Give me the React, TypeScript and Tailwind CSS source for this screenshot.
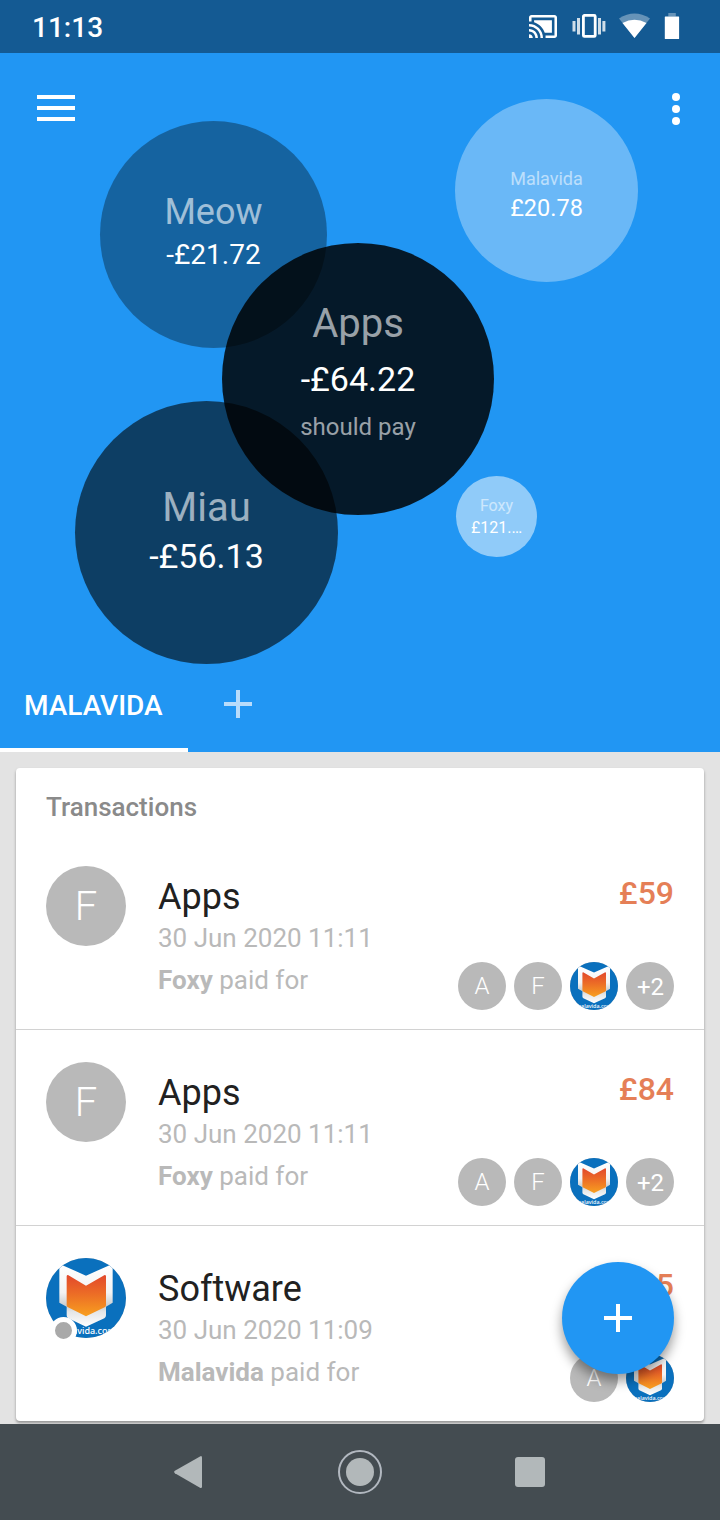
import { MdCastConnected } from "react-icons/md";

const BUBBLES = [
  { name: "Meow", amount: "-£21.72", note: "", box: "left-[100px] top-[68px] size-[227px] bg-black/34 pt-[73px]", nameCls: "text-[36px] text-white/60", amountCls: "text-[28px] mt-[11px]" },
  { name: "Malavida", amount: "£20.78", note: "", box: "left-[455px] top-[46px] size-[183px] bg-white/33 pt-[71px]", nameCls: "text-[18px] text-white/55", amountCls: "text-[23.5px] mt-[9px]" },
  { name: "Miau", amount: "-£56.13", note: "", box: "left-[75px] top-[348px] size-[263px] bg-black/59 pt-[87px]", nameCls: "text-[40px] text-white/60", amountCls: "text-[34px] mt-[11px]" },
  { name: "Apps", amount: "-£64.22", note: "should pay", box: "left-[222px] top-[190px] size-[272px] bg-black/83 pt-[61px]", nameCls: "text-[40px] text-white/60", amountCls: "text-[34px] mt-[18px]" },
  { name: "Foxy", amount: "£121.…", note: "", box: "left-[456px] top-[423px] size-[81px] bg-white/50 pt-[22px]", nameCls: "text-[16px] text-white/55", amountCls: "text-[16px] mt-[6px]" },
];

const TRANSACTIONS = [
  { title: "Apps", date: "30 Jun 2020 11:11", payer: "Foxy", avatar: "F", amount: "£59", people: ["A", "F", "logo", "+2"] },
  { title: "Apps", date: "30 Jun 2020 11:11", payer: "Foxy", avatar: "F", amount: "£84", people: ["A", "F", "logo", "+2"] },
  { title: "Software", date: "30 Jun 2020 11:09", payer: "Malavida", avatar: "logo", amount: "£15", people: ["A", "logo"] },
];

function Logo() {
  return (
    <svg viewBox="0 0 240 240" className="size-full rounded-full">
      <defs>
        <linearGradient id="shield" x1="0" y1="0" x2="0" y2="1">
          <stop offset="0" stopColor="#e2482b" />
          <stop offset="0.45" stopColor="#ec6c26" />
          <stop offset="1" stopColor="#f8a01f" />
        </linearGradient>
        <linearGradient id="frame" x1="0" y1="0" x2="0" y2="1">
          <stop offset="0" stopColor="#ffffff" />
          <stop offset="0.45" stopColor="#f3f3f3" />
          <stop offset="0.66" stopColor="#c9cdd0" />
          <stop offset="0.76" stopColor="#e4e6e7" />
          <stop offset="1" stopColor="#ffffff" />
        </linearGradient>
      </defs>
      <rect width="240" height="240" fill="#0a70bd" />
      <path d="M46 20 120 53l74-33q6 1 6 8v106l-20 12v26q0 6-5 9l-55 25-53-25q-5-3-5-9v-26l-22-12V28q0-7 6-8z" fill="url(#frame)" />
      <path d="M66 51l54 32 56-32q4 0 4 4v86q0 5-4 7l-56 27-54-27q-4-2-4-7V55q0-4 4-4z" fill="url(#shield)" />
      <text x="120" y="229" textAnchor="middle" fontSize="27" fontWeight="500" fill="#fff" fontFamily="Noto Sans, sans-serif">malavida.com</text>
    </svg>
  );
}

function Person({ label }: { label: string }) {
  return (
    <div className="size-12 rounded-full bg-[#b9b9b9] text-white text-[24px] leading-none flex items-center justify-center">
      {label === "logo" ? <Logo /> : <span className={label.length > 1 ? "pt-[2px] pl-px" : "font-light"}>{label}</span>}
    </div>
  );
}

function StatusBar() {
  return (
    <div className="h-[53px] bg-[#145a93] flex justify-between pl-8 pr-10 text-white">
      <span className="text-[28px] font-medium leading-none pt-[14px]">11:13</span>
      <div className="flex items-start pt-[13px]">
        <MdCastConnected viewBox="1 3 22 18" className="w-7 h-[23px] mt-[2px] mr-[15px]" />
        <svg viewBox="0 0 34 26" className="w-[34px] h-[26px] mr-[13px]" fill="currentColor">
          <rect x="0.5" y="8" width="3" height="10.500" opacity="0.8" />
          <rect x="5" y="5" width="3" height="16.500" opacity="0.8" />
          <rect x="11.400" y="2.400" width="11.800" height="21" rx="1" fill="none" stroke="currentColor" strokeWidth="2.800" />
          <rect x="26" y="5" width="3" height="16.500" opacity="0.8" />
          <rect x="30.400" y="8" width="3" height="10.500" opacity="0.8" />
        </svg>
        <svg viewBox="0 0 32 26" className="w-8 h-[26px] mr-[13px]" fill="currentColor">
          <path d="M0 5.500Q15.500-4.500 31 5.500L15.500 25z" opacity="0.35" />
          <path d="M3.500 10Q15.500 3.500 27.500 10L15.500 25z" />
        </svg>
        <svg viewBox="0 0 16 26" className="w-4 h-[26px]" fill="currentColor">
          <path d="M4.300 0h7.500v3.500H4.300z" opacity="0.35" />
          <rect x="0.800" y="3.500" width="14.300" height="22.500" rx="0.500" />
        </svg>
      </div>
    </div>
  );
}

export default function App() {
  return (
    <div className="w-[720px] h-[1520px] overflow-hidden flex flex-col relative bg-[#e3e3e3] font-['Roboto',sans-serif]">
      <StatusBar />

      <header className="relative h-[699px] bg-[#2196f3] text-white flex flex-col justify-between">
        <div className="flex justify-between pl-[37px] pr-10 pt-10">
          <button className="flex flex-col gap-[7px] pt-[2px]">
            <span className="w-[38px] h-1 bg-white" />
            <span className="w-[38px] h-1 bg-white" />
            <span className="w-[38px] h-1 bg-white" />
          </button>
          <button className="flex flex-col gap-1">
            <span className="size-2 rounded-full bg-white" />
            <span className="size-2 rounded-full bg-white" />
            <span className="size-2 rounded-full bg-white" />
          </button>
        </div>

        {BUBBLES.map(b => (
          <div key={b.name} className={`absolute rounded-full flex flex-col items-center leading-none ${b.box}`}>
            <span className={`leading-none ${b.nameCls}`}>{b.name}</span>
            <span className={`leading-none ${b.amountCls}`}>{b.amount}</span>
            {b.note && <span className="text-[24px] leading-none mt-[19px] text-white/60">{b.note}</span>}
          </div>
        ))}

        <nav className="h-24 flex">
          <div className="w-[188px] border-b-4 border-white pl-6 pt-9 text-[28px] leading-none font-medium">MALAVIDA</div>
          <svg viewBox="0 0 28 28" className="size-7 ml-9 mt-[34px]" stroke="#b8dcfb" strokeWidth="4">
            <path d="M14 0v28M0 14h28" fill="none" />
          </svg>
        </nav>
      </header>

      <main className="h-[672px] px-4 pt-4 relative">
        <div className="bg-white rounded h-[653px] shadow-[0_2px_3px_rgba(0,0,0,0.35)]">
          <h2 className="h-[66px] pl-[30px] pt-[26px] text-[26px] leading-none font-medium text-[#8a8a8a]">Transactions</h2>
          {TRANSACTIONS.map((t, i) => (
            <div key={i} className="h-[196px] flex border-b border-[#d2d2d2] last:border-0 last:h-[195px] px-[30px]">
              <div className="relative size-20 mt-8 rounded-full bg-[#b9b9b9] text-white text-[40px] leading-none font-light flex items-center justify-center">
                {t.avatar === "logo" ? <Logo /> : <span className="pt-[2px]">{t.avatar}</span>}
                {t.avatar === "logo" && <span className="absolute left-[4px] top-[59px] size-[27px] rounded-full border-5 border-white bg-[#a9a9a9]" />}
              </div>
              <div className="ml-8 pt-[45px] flex-1 text-[#b9b9b9] text-[26px] leading-none">
                <p className="text-[36px] leading-none text-[#212121]">{t.title}</p>
                <p className="mt-[10px]">{t.date}</p>
                <p className="mt-4"><b className="font-bold">{t.payer}</b> paid for</p>
              </div>
              <div className="flex flex-col items-end pt-[43px]">
                <span className="text-[32px] leading-none font-medium text-[#e57f57]">{t.amount}</span>
                <div className="flex gap-2 mt-[53px]">
                  {t.people.map(p => <Person key={p} label={p} />)}
                </div>
              </div>
            </div>
          ))}
        </div>
        <button className="absolute right-[46px] bottom-[50px] size-28 rounded-full bg-[#2196f3] shadow-[0_7px_12px_rgba(0,0,0,0.4)] flex items-center justify-center">
          <svg viewBox="0 0 28 28" className="size-7" stroke="#fff" strokeWidth="4">
            <path d="M14 0v28M0 14h28" fill="none" />
          </svg>
        </button>
      </main>

      <footer className="relative h-24 bg-[#444c51] text-[#b2b8ba] flex items-center pl-[174px]">
        <svg viewBox="0 0 28 32" className="w-7 h-8" fill="currentColor">
          <path d="M26 .4q2-1 2 1.200v29q0 2-2 1.200L.9 17.200q-1.600-1.200 0-2.400z" />
        </svg>
        <div className="ml-[136px] size-11 rounded-full border-2 border-[#b2b8c0] flex items-center justify-center">
          <div className="size-7 rounded-full bg-[#b2b8ba]" />
        </div>
        <div className="ml-[133px] size-[30px] rounded-[3px] bg-[#b2b8ba]" />
      </footer>
    </div>
  );
}
